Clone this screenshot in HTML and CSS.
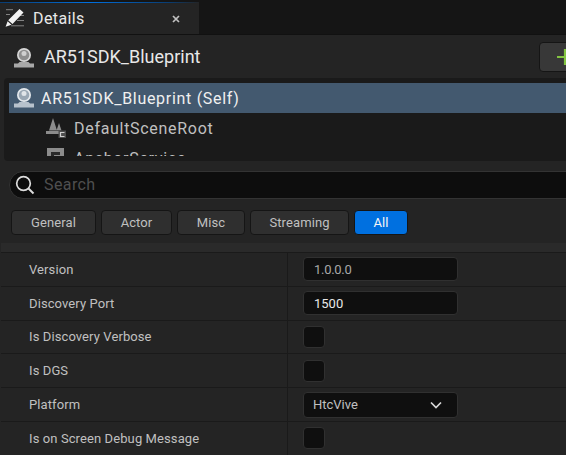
FILE: index.html
```html
<!DOCTYPE html>
<html lang="en">
<head>
<meta charset="utf-8">
<title>Details</title>
<link rel="stylesheet" href="styles.css">
</head>
<body>
<div class="panel">
  <div class="tabbar">
    <div class="tab">
      <svg class="tab-icon" viewBox="0 0 20 20"><path d="M1 .7h7M1 5.500h4M13 6.500h6M12 11.500h7M6 16.800h13" fill="none" stroke="#8f8f8f" stroke-width="0.900"/><path d="M14.500 0l4 3.500L7.500 15 3.200 11.300zM2.600 12.300l3.900 3.400-5.900 2z" fill="#f2f2f2"/></svg>
      <span class="tab-title">Details</span>
      <svg class="tab-close" viewBox="0 0 8 8"><path d="M1 1l6 6M7 1L1 7" stroke="#c0c0c0" stroke-width="1.700" fill="none"/></svg>
    </div>
  </div>
  <div class="actor-head">
    <svg class="cam head-cam" viewBox="0 0 20 20"><circle cx="10" cy="7" r="7" fill="#d6d6d6"/><circle cx="10" cy="7" r="5.300" fill="#8e8e8e"/><circle cx="10" cy="5.500" r="2.500" fill="#cfcfcf"/><path d="M5.500 14h9l1.500 1.500h4v4H0v-4h4z" fill="#a8a8a8"/></svg>
    <span class="actor-name">AR51SDK_Blueprint</span>
    <div class="add-btn"><svg class="plus" viewBox="0 0 16 16"><path d="M0 8h16M8 0v16" stroke="#83c441" stroke-width="2.200"/></svg></div>
  </div>
  <div class="tree">
    <div class="tree-view">
      <div class="tree-row selected">
        <svg class="cam tree-cam" viewBox="0 0 20 20"><circle cx="10" cy="7" r="7" fill="#e4e8ec"/><circle cx="10" cy="7" r="5.300" fill="#9aa7b4"/><circle cx="10" cy="5.500" r="2.500" fill="#e0e4e8"/><path d="M5.500 14h9l1.500 1.500h4v4H0v-4h4z" fill="#b8c2cc"/></svg>
        <span>AR51SDK_Blueprint (Self)</span>
      </div>
      <div class="tree-row child">
        <svg class="comp" viewBox="0 0 20 20"><path d="M7 0l4 12.500H3zM13 5l2.500 7.500h-5zM0 13h13v3H0z" fill="#8c8c8c"/><path d="M12.500 12.500h7.500v7.500h-7.500z" fill="#4d4d4d"/><path d="M18.500 14.500h-4v4h4" fill="none" stroke="#cfcfcf" stroke-width="1.200"/></svg>
        <span>DefaultSceneRoot</span>
      </div>
      <div class="tree-row child">
        <svg class="comp" viewBox="0 0 20 20"><path d="M1 0h17v17H1z" fill="#8c8c8c"/><path d="M5 4h9v3H8v7H5z" fill="#2a2a2a"/></svg>
        <span>AnchorService</span>
      </div>
    </div>
  </div>
  <div class="search">
    <svg class="search-icon" viewBox="0 0 20 20"><circle cx="8.500" cy="8.500" r="6.800" fill="none" stroke="#dcdcdc" stroke-width="1.700"/><path d="M13.500 13.500l5 5" stroke="#dcdcdc" stroke-width="2"/></svg>
    <span class="search-text">Search</span>
  </div>
  <div class="filters">
    <div class="filter w-general">General</div>
    <div class="filter w-actor">Actor</div>
    <div class="filter w-misc">Misc</div>
    <div class="filter w-stream">Streaming</div>
    <div class="filter w-all active">All</div>
  </div>
  <div class="band"></div>
  <div class="props">
    <div class="prop">
      <div class="prop-name">Version</div>
      <div class="prop-value"><div class="field dim">1.0.0.0</div></div>
    </div>
    <div class="prop">
      <div class="prop-name">Discovery Port</div>
      <div class="prop-value"><div class="field">1500</div></div>
    </div>
    <div class="prop">
      <div class="prop-name">Is Discovery Verbose</div>
      <div class="prop-value"><div class="check"></div></div>
    </div>
    <div class="prop">
      <div class="prop-name">Is DGS</div>
      <div class="prop-value"><div class="check"></div></div>
    </div>
    <div class="prop">
      <div class="prop-name">Platform</div>
      <div class="prop-value">
        <div class="combo"><span>HtcVive</span><svg class="chev" viewBox="0 0 12 8"><path d="M1 1.500l5 5 5-5" fill="none" stroke="#d8d8d8" stroke-width="1.700"/></svg></div>
      </div>
    </div>
    <div class="prop">
      <div class="prop-name">Is on Screen Debug Message</div>
      <div class="prop-value"><div class="check"></div></div>
    </div>
  </div>
</div>
</body>
</html>
```

FILE: styles.css
```css
* { box-sizing: border-box; }
html, body { margin: 0; padding: 0; }
body {
  width: 566px;
  height: 455px;
  overflow: hidden;
  background: #242424;
  font-family: Roboto, "Liberation Sans", sans-serif;
}
.panel { width: 566px; height: 455px; overflow: hidden; display: flex; flex-direction: column; background: #242424; }

.tabbar { height: 35px; flex: none; background: #151515; padding-top: 2px; border-bottom: 1px solid #111; }
.tab {
  width: 199px; height: 32px;
  background: #242424;
  border-top: 1px solid #0070e0;
  border-image: linear-gradient(90deg, #0a3c70, #0070e0 45%, #0a3c70 85%, #242424) 1;
  display: flex; align-items: center;
  padding-left: 5px;
}
.tab-icon { width: 20px; height: 20px; flex: none; }
.tab-title { margin-left: 8px; font-size: 16px; color: #e8e8e8; letter-spacing: 0.4px; }
.tab-close { width: 8px; height: 8px; margin-left: 87px; flex: none; }

.actor-head { height: 43px; flex: none; display: flex; align-items: center; padding-left: 14px; }
.cam { width: 20px; height: 20px; flex: none; }
.head-cam { margin-top: 3px; }
.actor-name { margin-left: 10px; font-size: 18px; color: #e8e8e8; }
.add-btn {
  width: 41px; height: 30px; margin-left: auto; margin-right: -14px;
  background: #383838; border: 1px solid #151515; border-radius: 4px;
  display: flex; align-items: center; padding-left: 17px; flex: none;
}
.plus { width: 16px; height: 16px; flex: none; }

.tree { height: 83px; flex: none; margin-left: 4px; background: #1a1a1a; border-radius: 4px 0 0 4px; padding-top: 5px; }
.tree-view { height: 73px; overflow: hidden; }
.tree-row { height: 30px; display: flex; align-items: center; margin-left: 5px; font-size: 16px; color: #c0c0c0; letter-spacing: 0.7px; white-space: nowrap; }
.tree-row.selected { background: #43596f; color: #f0f0f0; padding-left: 5px; }
.tree-cam { margin-right: 7px; }
.tree-row.child { padding-left: 37px; }
.comp { width: 20px; height: 20px; margin-right: 8px; flex: none; }

.search {
  height: 28px; flex: none; margin: 10px -20px 0 9px;
  background: #0d0d0d; border: 1px solid #333; border-radius: 15px;
  display: flex; align-items: center; padding-left: 5px;
}
.search-icon { width: 20px; height: 20px; flex: none; }
.search-text { margin-left: 9px; padding-bottom: 2px; font-size: 16px; color: #4f4f4f; letter-spacing: 0.4px; }

.filters { display: flex; flex: none; gap: 5px; margin: 11px 0 0 11px; height: 25px; }
.filter {
  height: 25px; background: #2f2f2f; border: 1px solid #151515; border-radius: 4px;
  display: flex; align-items: center; justify-content: center;
  font-size: 13px; color: #c0c0c0; letter-spacing: 0.1px;
}
.w-general { width: 85px; }
.w-actor { width: 71px; }
.w-misc { width: 68px; }
.w-stream { width: 99px; }
.w-all { width: 54px; }
.filter.active { background: #0070e0; color: #f5f5f5; }

.band { height: 9px; flex: none; margin-top: 8px; margin-left: 1px; background: #2a2a2a; }
.props { flex: 1; }
.prop {
  height: 33.8px; display: flex; align-items: center;
  margin-left: 1px;
  border-top: 1px solid #1a1a1a;
}
.prop-name { width: 287px; height: 100%; flex: none; display: flex; align-items: center; padding-left: 28px; font-size: 13px; color: #c0c0c0; letter-spacing: 0.1px; border-right: 1px solid #1a1a1a; }
.prop-value { flex: 1; padding-left: 15px; display: flex; align-items: center; }
.field {
  width: 155px; height: 24px; background: #0f0f0f; border: 1px solid #303030; border-radius: 4px;
  display: flex; align-items: center; padding-left: 10px; font-size: 13px; color: #e8e8e8;
}
.field.dim { color: #a8a8a8; letter-spacing: -0.3px; }
.check { width: 22px; height: 22px; background: #0f0f0f; border: 1px solid #303030; border-radius: 4px; }
.combo {
  width: 155px; height: 26px; background: #0f0f0f; border: 1px solid #303030; border-radius: 4px;
  display: flex; align-items: center; padding-left: 9px; font-size: 13px; color: #c0c0c0;
}
.chev { width: 12px; height: 8px; margin-left: auto; margin-right: 15px; flex: none; }
```
